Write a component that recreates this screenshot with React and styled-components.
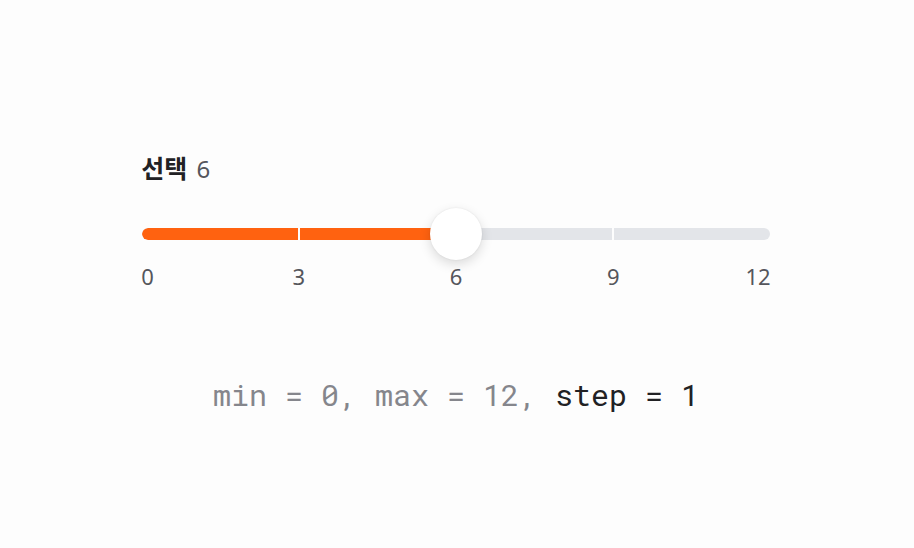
import React, { useState } from "react";
import styled, { createGlobalStyle } from "styled-components";

const GlobalStyle = createGlobalStyle`
  * { box-sizing: border-box; }
  body {
    margin: 0;
    background: #fdfdfd;
    font-family: "Noto Sans", "Noto Sans CJK KR", sans-serif;
  }
`;

const Page = styled.main`
  min-height: 100vh;
  display: flex;
  flex-direction: column;
  align-items: center;
  padding: 147px 2px 0 0;
`;

const Field = styled.div`
  width: 69%;
`;

const Header = styled.div`
  display: flex;
  align-items: baseline;
  gap: 9px;
  font-size: 24px;
  line-height: 40px;
`;

const Title = styled.label`
  font-family: "Noto Sans CJK KR", sans-serif;
  font-size: 25px;
  font-weight: 700;
  color: #212124;
`;

const Value = styled.output`
  color: #55565c;
`;

const Control = styled.div`
  display: grid;
  align-items: center;
  margin: 19px 1px 0;

  > * {
    grid-area: 1 / 1;
  }
`;

const Rail = styled.div`
  display: flex;
  height: 12px;
  overflow: hidden;
  border-radius: 6px;
  background: #e3e5e9;
`;

const Fill = styled.div`
  height: 12px;
  border-radius: 6px 0 0 6px;
  background: #ff6210;
`;

const Segments = styled.div`
  display: flex;
`;

const Segment = styled.span`
  flex: 1;
  height: 12px;

  & + & {
    border-left: 2px solid #fdfdfd;
  }
`;

const Range = styled.input`
  appearance: none;
  width: 100%;
  height: 52px;
  margin: 0;
  background: transparent;
  cursor: pointer;

  &::-webkit-slider-thumb {
    appearance: none;
    width: 52px;
    height: 52px;
    border-radius: 50%;
    background: #ffffff;
    box-shadow: 0 4px 12px rgba(0, 0, 0, 0.14), 0 0 2px rgba(0, 0, 0, 0.08);
  }

  &::-moz-range-thumb {
    width: 52px;
    height: 52px;
    border: 0;
    border-radius: 50%;
    background: #ffffff;
    box-shadow: 0 4px 12px rgba(0, 0, 0, 0.14), 0 0 2px rgba(0, 0, 0, 0.08);
  }
`;

const Scale = styled.div`
  display: grid;
  grid-template-columns: 1fr 2fr 2fr 2fr 1fr;
  font-size: 22px;
  line-height: 32px;
  text-align: center;
  color: #55565c;
`;

const Mark = styled.span`
  &:first-child {
    text-align: left;
  }

  &:last-child {
    text-align: right;
  }
`;

const Caption = styled.p`
  margin: 83px 0 0;
  font-family: "Roboto Mono", "Liberation Mono", monospace;
  font-size: 30px;
  line-height: 40px;
  color: #85868c;
`;

const Emphasis = styled.span`
  color: #212124;
`;

const MIN = 0;
const MAX = 12;
const MARKS = [0, 3, 6, 9, 12];

export default function App() {
  const [value, setValue] = useState(6);
  const percent = ((value - MIN) / (MAX - MIN)) * 100;

  return (
    <>
      <GlobalStyle />
      <Page>
        <Field>
          <Header>
            <Title htmlFor="choice">선택</Title>
            <Value htmlFor="choice">{value}</Value>
          </Header>
          <Control>
            <Rail>
              <Fill style={{ width: `${percent}%` }} />
            </Rail>
            <Segments>
              {MARKS.slice(1).map((mark) => (
                <Segment key={mark} />
              ))}
            </Segments>
            <Range
              id="choice"
              type="range"
              min={MIN}
              max={MAX}
              step={1}
              value={value}
              onChange={(event) => setValue(Number(event.target.value))}
            />
          </Control>
          <Scale>
            {MARKS.map((mark) => (
              <Mark key={mark}>{mark}</Mark>
            ))}
          </Scale>
        </Field>
        <Caption>
          min = 0, max = 12, <Emphasis>step = 1</Emphasis>
        </Caption>
      </Page>
    </>
  );
}
